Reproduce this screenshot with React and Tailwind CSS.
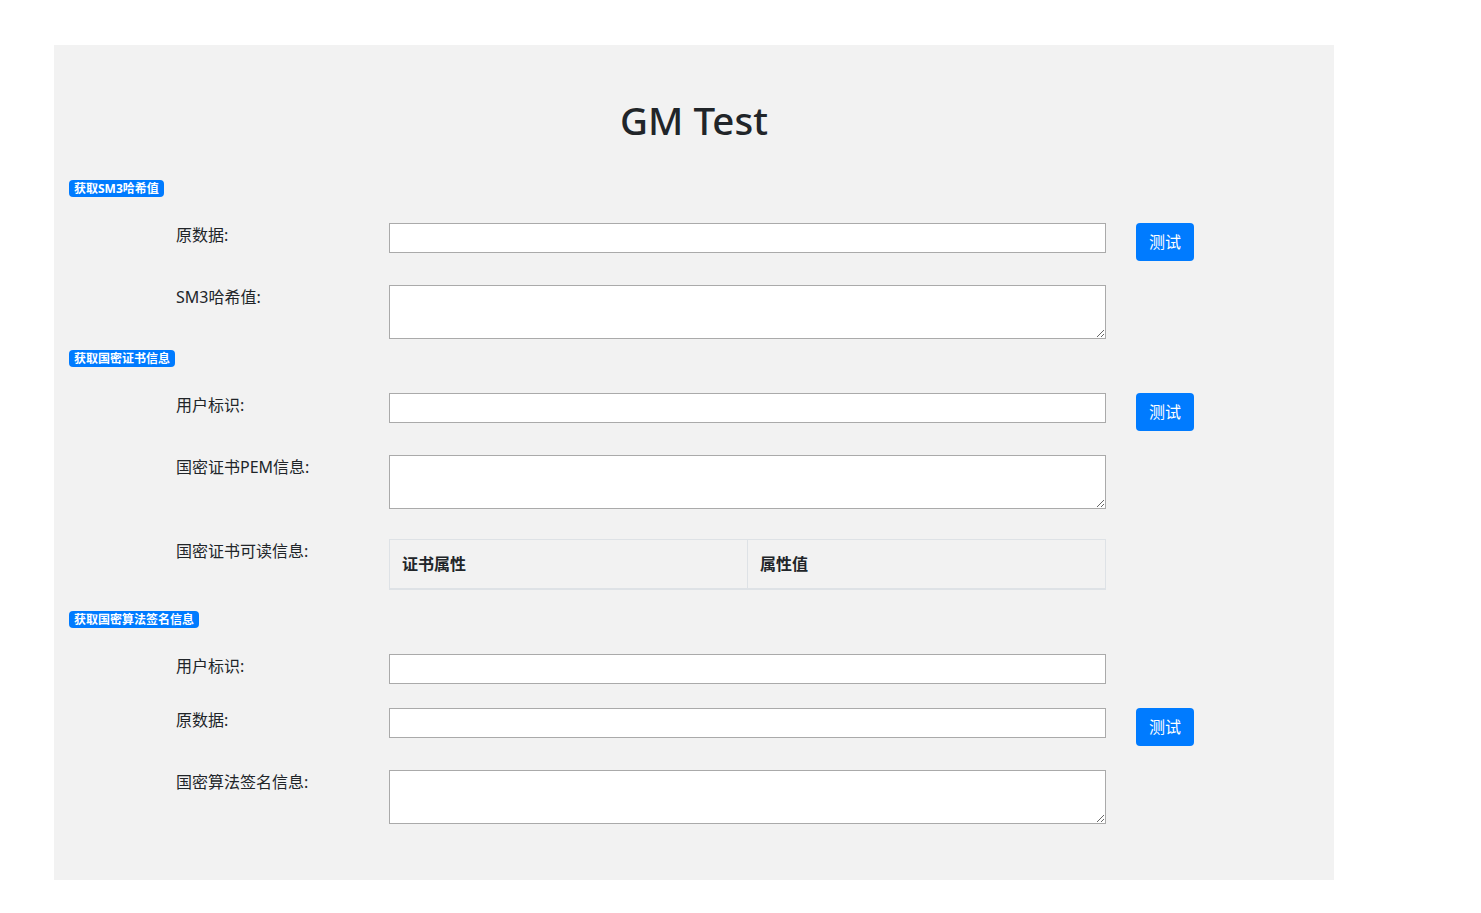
const font = { fontFamily: '"Noto Sans", "Noto Sans CJK SC", sans-serif' }

function Badge({ children, className = "" }) {
  return (
    <div className={`flex ${className}`}>
      <span className="inline-flex h-[17px] items-center rounded-[4px] bg-[#007bff] px-[5px] text-[12px] font-bold leading-none text-white">
        {children}
      </span>
    </div>
  )
}

function Row({ label, children, button, className = "" }) {
  return (
    <div className={`flex items-start pl-[122px] ${className}`}>
      <label className="w-[213px] shrink-0 text-[16px] leading-[24px] text-[#212529]">{label}</label>
      <div className="w-[717px] shrink-0">{children}</div>
      {button && (
        <button
          type="button"
          className="ml-[30px] h-[38px] w-[58px] rounded-[4px] bg-[#007bff] text-[16px] text-white"
        >
          测试
        </button>
      )}
    </div>
  )
}

const inputCls = "block h-[30px] w-full border border-[#aaaaaa] bg-white"
const areaCls = "block h-[54px] w-full border border-[#aaaaaa] bg-white"

export default function App() {
  return (
    <div className="min-h-[913px] bg-white pt-[45px]" style={font}>
      <div className="ml-[54px] w-[1280px] bg-[#f2f2f2] pb-[56px] pt-[51px]">
        <h1 className="text-center text-[38.5px] font-medium leading-[48px] text-[#212529]">GM Test</h1>

        <Badge className="mt-[36px] pl-[15px]">获取SM3哈希值</Badge>
        <Row label="原数据:" button className="mt-[26px]">
          <input className={inputCls} />
        </Row>
        <Row label="SM3哈希值:" className="mt-[24px]">
          <textarea className={areaCls} />
        </Row>

        <Badge className="mt-[11px] pl-[15px]">获取国密证书信息</Badge>
        <Row label="用户标识:" button className="mt-[26px]">
          <input className={inputCls} />
        </Row>
        <Row label="国密证书PEM信息:" className="mt-[24px]">
          <textarea className={areaCls} />
        </Row>
        <Row label="国密证书可读信息:" className="mt-[30px]">
          <table className="w-full border-collapse border border-[#dee2e6] text-[16px] text-[#212529]">
            <thead>
              <tr>
                <th className="w-1/2 border border-b-2 border-[#dee2e6] px-[12px] py-[12px] text-left font-bold leading-[24px]">
                  证书属性
                </th>
                <th className="w-1/2 border border-b-2 border-[#dee2e6] px-[12px] py-[12px] text-left font-bold leading-[24px]">
                  属性值
                </th>
              </tr>
            </thead>
          </table>
        </Row>

        <Badge className="mt-[21px] pl-[15px]">获取国密算法签名信息</Badge>
        <Row label="用户标识:" className="mt-[26px]">
          <input className={inputCls} />
        </Row>
        <Row label="原数据:" button className="mt-[24px]">
          <input className={inputCls} />
        </Row>
        <Row label="国密算法签名信息:" className="mt-[24px]">
          <textarea className={areaCls} />
        </Row>
      </div>
    </div>
  )
}
